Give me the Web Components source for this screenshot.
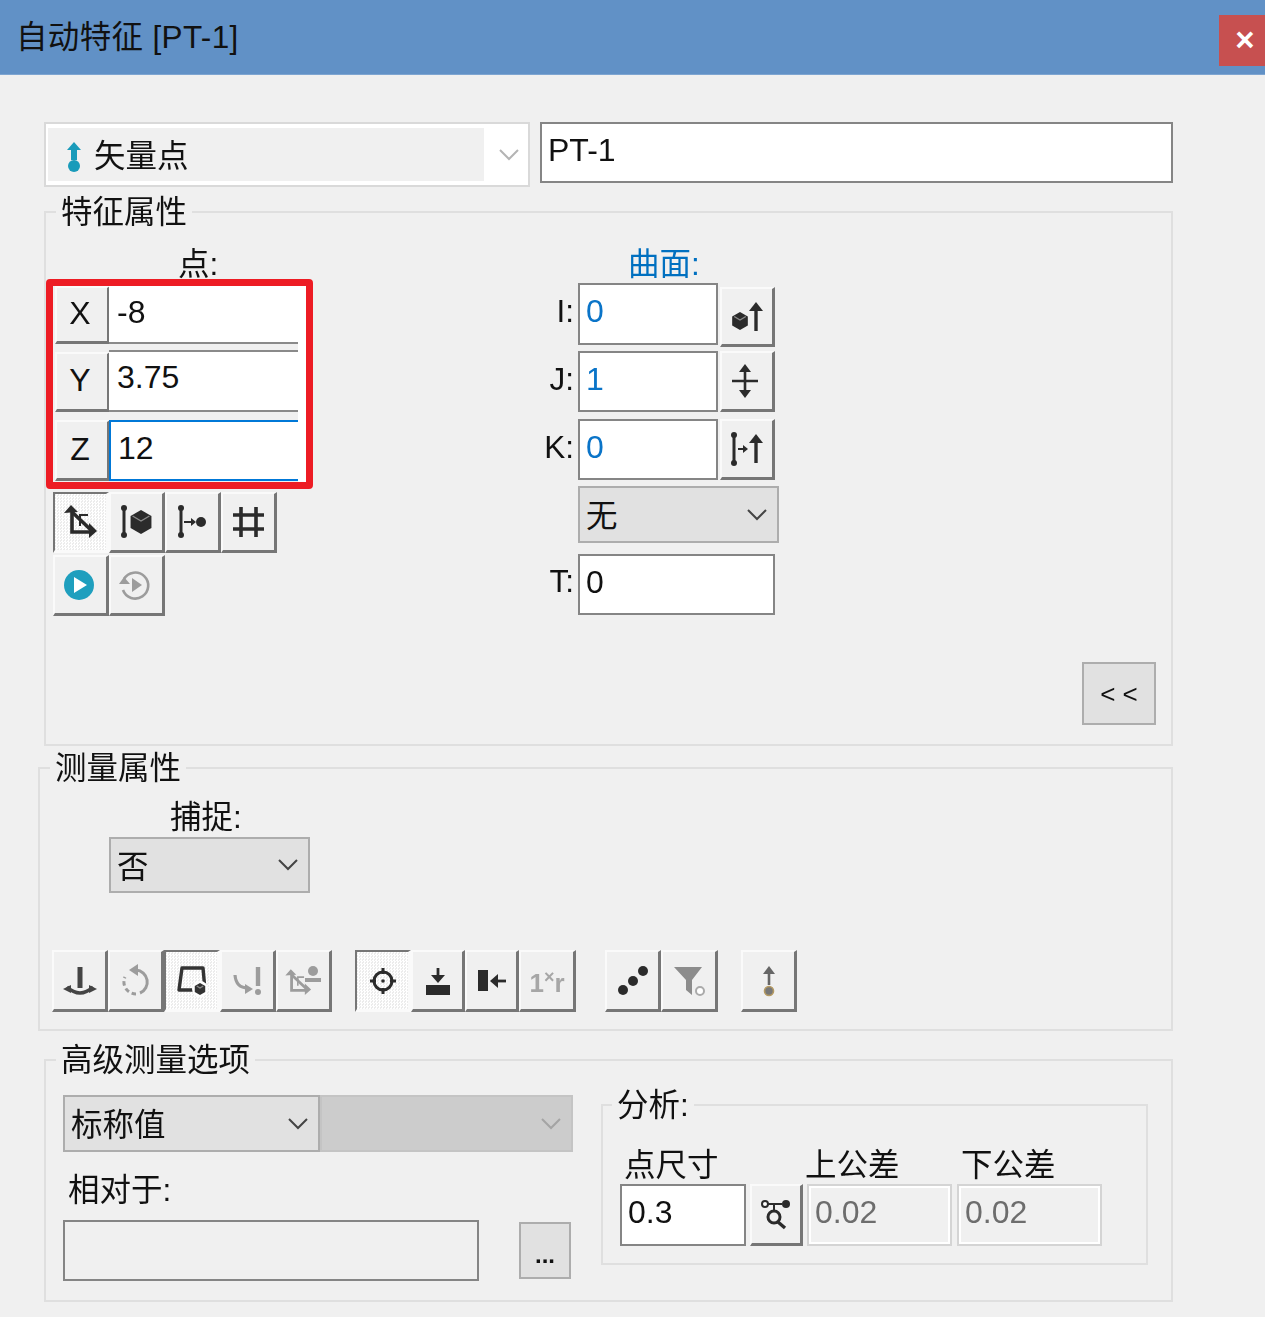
<!DOCTYPE html>
<html lang="zh-CN">
<head>
<meta charset="utf-8">
<title>自动特征 [PT-1]</title>
<style>
html,body{margin:0;background:#f0f0f0}
body{font:31.5px/32px "Liberation Sans","Noto Sans CJK SC",sans-serif;color:#111}
</style>
</head>
<body>
<auto-feature-dialog></auto-feature-dialog>

<template id="dialogTpl">
  <style>
    :host{display:block;width:1265px;height:1317px;overflow:hidden;filter:blur(.6px)}
    .main{padding:47px 92px 0 44px}
    .top{display:flex;gap:10px;align-items:flex-start;height:65px}
    .top win-combo{width:486px;height:65px}
    .top win-input{flex:1;height:61px}
    .g1{margin-top:10px;height:549px}
    .g2{margin:7px 0 0 -6px;height:278px}
    .g3{margin-top:14px;height:257px}

    .g1-body{display:flex;height:517px}
    .left{width:267px}
    .cap-pt{margin:22px 0 -2px 132px;height:32px;line-height:30px}
    .redbox{border:7px solid #ed1c24;border-radius:4px;height:196px}
    .redin{border-right:8px solid #fff;height:196px;display:flex;flex-direction:column}
    .xyz{display:flex;height:58px;margin-bottom:6px}
    .xyz:nth-child(2){height:62px;margin-bottom:8px}
    .xyz:last-child{height:61px;margin:0}
    .xyz win-btn{width:55px;margin-left:2px;font-size:32px;padding:0 4px 3px 0}
    .xyz win-input{flex:1;margin-left:-1px}
    .tools{display:grid;grid-template-columns:repeat(4,56px);grid-auto-rows:61px;gap:2px 0;margin:3px 0 0 7px}
    .right{margin-left:221px;width:250px}
    .cap-sf{margin:22px 0 2px 94px;height:32px;line-height:30px;color:#0070c0}
    .vec{display:flex;align-items:flex-start}
    .vec label{width:40px;margin-right:4px;text-align:right;line-height:56px}
    .vec win-input{width:140px;height:100%}
    .vec win-btn{width:55px;margin-left:2px;height:100%}
    .blue{color:#0a74c8}
    .back{margin:auto 15px 19px auto;width:74px;height:63px}

    .cap-snap{margin:18px 0 0 130px;height:32px}
    .snap{width:201px;height:56px;margin:4px 0 0 69px}
    .g2-tools{display:flex;margin:57px 0 0 12px;height:62px}
    .g2-tools win-btn{width:56px}
    .sp{width:23px}

    .g3-body{display:flex}
    .g3-left{width:555px;padding-left:17px;box-sizing:border-box}
    .cmbs{display:flex;margin-top:20px;height:57px;width:510px}
    .cmbs win-combo:first-child{width:257px}
    .cmbs win-combo:last-child{width:253px}
    .cap-rel{margin:22px 0 0 5px;height:32px;line-height:32px}
    .rel{display:flex;align-items:flex-start;margin-top:14px}
    .rel win-input{width:416px;height:61px}
    .rel win-btn{width:52px;height:57px;margin:2px 0 0 40px}
    .g3-right{width:547px;margin-top:15px;height:175px;--lg:9px}
    .ana{display:grid;grid-template-columns:126px 53px 145px 146px;column-gap:4px;margin:28px 0 0 17px;grid-template-rows:36px 62px;line-height:34px}
    .ana span:first-child{grid-column:1/3;padding-left:4px}
    .ana span:nth-child(2){margin-left:-2px}
    .ana span:nth-child(3){margin-left:5px}
    .ana win-input[disabled]:last-child{margin-left:1px}
  </style>
  <dlg-titlebar>自动特征 [PT-1]</dlg-titlebar>
  <div class="main">
    <div class="top">
      <win-combo kind="flat"><win-icon name="topvec"></win-icon>矢量点</win-combo>
      <win-input>PT-1</win-input>
    </div>

    <win-group class="g1" legend="特征属性">
      <div class="g1-body">
        <div class="left">
          <div class="cap-pt">点:</div>
          <div class="redbox"><div class="redin">
            <div class="xyz"><win-btn>X</win-btn><win-input kind="inner">-8</win-input></div>
            <div class="xyz"><win-btn style="margin-top:2px">Y</win-btn><win-input kind="inner" style="border-top-width:2px;line-height:50px">3.75</win-input></div>
            <div class="xyz"><win-btn>Z</win-btn><win-input kind="focus">12</win-input></div>
          </div></div>
          <div class="tools">
            <win-btn pressed><win-icon name="axes"></win-icon></win-btn>
            <win-btn><win-icon name="pincube"></win-icon></win-btn>
            <win-btn><win-icon name="pindot"></win-icon></win-btn>
            <win-btn><win-icon name="hash"></win-icon></win-btn>
            <win-btn style="padding-right:4px"><win-icon name="play"></win-icon></win-btn>
            <win-btn style="padding-right:4px"><win-icon name="replay"></win-icon></win-btn>
          </div>
        </div>
        <div class="right">
          <div class="cap-sf">曲面:</div>
          <div class="vec" style="height:62px"><label>I:</label><win-input class="blue">0</win-input><win-btn style="height:60px;margin-top:4px"><win-icon name="cubeup"></win-icon></win-btn></div>
          <div class="vec" style="height:61px;margin-top:6px"><label>J:</label><win-input class="blue">1</win-input><win-btn><win-icon name="dblarrow"></win-icon></win-btn></div>
          <div class="vec" style="height:61px;margin-top:7px"><label>K:</label><win-input class="blue">0</win-input><win-btn><win-icon name="pinup"></win-icon></win-btn></div>
          <div class="vec" style="height:57px;margin-top:6px;padding-left:44px"><win-combo style="width:201px;height:57px">无</win-combo></div>
          <div class="vec" style="height:61px;margin-top:11px"><label style="line-height:54px">T:</label><win-input style="width:197px">0</win-input></div>
        </div>
        <win-btn class="back" kind="flat">&lt; &lt;</win-btn>
      </div>
    </win-group>

    <win-group class="g2" legend="测量属性">
      <div class="cap-snap">捕捉:</div>
      <win-combo class="snap">否</win-combo>
      <div class="g2-tools">
        <win-btn><win-icon name="anchor"></win-icon></win-btn>
        <win-btn><win-icon name="rotate"></win-icon></win-btn>
        <win-btn pressed><win-icon name="trap"></win-icon></win-btn>
        <win-btn><win-icon name="hookpin"></win-icon></win-btn>
        <win-btn><win-icon name="axesdot"></win-icon></win-btn>
        <div class="sp"></div>
        <win-btn pressed><win-icon name="target"></win-icon></win-btn>
        <win-btn style="width:54px"><win-icon name="downbar"></win-icon></win-btn>
        <win-btn style="width:54px"><win-icon name="barleft"></win-icon></win-btn>
        <win-btn style="width:57px"><win-icon name="onexr"></win-icon></win-btn>
        <div class="sp" style="width:29px"></div>
        <win-btn><win-icon name="dots"></win-icon></win-btn>
        <win-btn style="width:57px"><win-icon name="funnel"></win-icon></win-btn>
        <div class="sp"></div>
        <win-btn><win-icon name="updot"></win-icon></win-btn>
      </div>
    </win-group>

    <win-group class="g3" legend="高级测量选项">
      <div class="g3-body">
        <div class="g3-left">
          <div class="cmbs"><win-combo>标称值</win-combo><win-combo kind="off"></win-combo></div>
          <div class="cap-rel">相对于:</div>
          <div class="rel"><win-input style="background:#f0f0f0"></win-input><win-btn kind="flat"><b style="font-weight:700;font-size:24px;position:relative;top:4px">...</b></win-btn></div>
        </div>
        <win-group class="g3-right" legend="分析:">
          <div class="ana">
            <span>点尺寸</span><span>上公差</span><span>下公差</span>
            <win-input>0.3</win-input>
            <win-btn><win-icon name="magnode"></win-icon></win-btn>
            <win-input disabled>0.02</win-input>
            <win-input disabled>0.02</win-input>
          </div>
        </win-group>
      </div>
    </win-group>
  </div>
</template>

<script>
// small helpers for the toolbar glyphs
var D = '#2b2b2b', G = '#9c9c9c';
function pin(x, c, top, bot) {
  return '<path d="M' + x + ' ' + top + 'V' + bot + '" stroke="' + c + '" stroke-width="3" fill="none"/>' +
    '<circle cx="' + x + '" cy="' + (top + 1) + '" r="3" fill="' + c + '"/><circle cx="' + x + '" cy="' + (bot - 1) + '" r="3" fill="' + c + '"/>';
}
function hex(x, y, r, c) {
  var k = r * 0.87, h = r / 2;
  return '<path d="M' + x + ' ' + (y - r) + 'L' + (x + k) + ' ' + (y - h) + 'V' + (y + h) + 'L' + x + ' ' + (y + r) + 'L' + (x - k) + ' ' + (y + h) + 'V' + (y - h) + 'Z" fill="' + c + '"/>' +
    '<path d="M' + (x - k + 2) + ' ' + (y - h) + 'L' + x + ' ' + (y - 1) + 'L' + (x + k - 2) + ' ' + (y - h) + '" stroke="#8a8a8a" stroke-width="1.4" fill="none"/>';
}
function axes(c, sw) {
  return '<g stroke="' + c + '" stroke-width="' + sw + '" fill="none"><path d="M11 8V30H30"/><path d="M11 10L30 28"/><path d="M19 24V13H27" stroke-width="2"/></g>' +
    '<path d="M3 11L10 3L17 10ZM36 29L28 21V36Z" fill="' + c + '"/>';
}

var ICONS = {
  topvec: '<path d="M20 6L27 14H23V24H17V14H13Z" fill="#1a9bba"/><circle cx="20" cy="30" r="6" fill="#1a9bba"/>',
  axes: axes(D, 3.6),
  pincube: pin(7, D, 5, 34) + hex(24, 20, 12, D),
  pindot: pin(8, D, 5, 34) + '<path d="M11 20H20" stroke="' + D + '" stroke-width="2"/><path d="M23 20L18 16V24Z" fill="' + D + '"/><circle cx="28" cy="20" r="5" fill="' + D + '"/>',
  hash: '<path d="M12 5V35M27 5V35M4 13H35M4 27H35" stroke="' + D + '" stroke-width="3.6"/>',
  play: '<circle cx="20" cy="20" r="15" fill="#1f9fbe"/><path d="M15 12L28 20L15 28Z" fill="#fff"/>',
  replay: '<path d="M9 14A13 13 0 1 1 8 25" stroke="' + G + '" stroke-width="2.6" fill="none"/><path d="M4 19H15L9 12Z" fill="' + G + '"/><path d="M17 13L27 20L17 27Z" fill="' + G + '"/>',
  cubeup: hex(13, 24, 9, D) + '<path d="M29 12V34" stroke="' + D + '" stroke-width="3.4"/><path d="M29 5L36 14H22Z" fill="' + D + '"/>',
  dblarrow: '<path d="M18 9V31M5 20H31" stroke="' + D + '" stroke-width="2.6"/><path d="M18 3L24 11H12ZM18 37L24 29H12Z" fill="' + D + '"/>',
  pinup: pin(7, D, 5, 35) + '<path d="M11 20H17" stroke="' + D + '" stroke-width="2"/><path d="M21 20L16 16V24Z" fill="' + D + '"/><path d="M29 12V34" stroke="' + D + '" stroke-width="3.4"/><path d="M29 5L36 14H22Z" fill="' + D + '"/>',
  anchor: '<path d="M20 6V27" stroke="#444" stroke-width="5"/><path d="M7 26Q20 38 33 26" stroke="#444" stroke-width="3.4" fill="none"/><path d="M3 28L11 24V32ZM37 28L29 24V32Z" fill="#444"/>',
  rotate: '<path d="M20 9A12 12 0 0 1 24 32" stroke="' + G + '" stroke-width="3" fill="none"/><path d="M20 33A12 12 0 0 1 9 16" stroke="' + G + '" stroke-width="3" fill="none" stroke-dasharray="4.5 3"/><path d="M22 3V15L13 9Z" fill="' + G + '"/>',
  trap: '<path d="M10 7H31L33 29H7Z" stroke="#333" stroke-width="3.4" fill="none" stroke-linejoin="round"/><circle cx="28" cy="28" r="8" fill="#fff"/>' + hex(28, 28, 6, '#333'),
  hookpin: '<path d="M7 14Q8 27 20 27" stroke="' + G + '" stroke-width="3.2" fill="none"/><path d="M25 28L17 23V33Z" fill="' + G + '"/><path d="M30 6V25" stroke="' + G + '" stroke-width="4.4"/><circle cx="30" cy="31" r="3" fill="' + G + '"/>',
  axesdot: '<g transform="translate(-1 6) scale(.78)">' + axes(G, 3.6) + '</g><circle cx="29" cy="10" r="5" fill="' + G + '"/><path d="M21 19H37" stroke="' + G + '" stroke-width="4"/>',
  target: '<circle cx="20" cy="20" r="9" stroke="' + D + '" stroke-width="3" fill="none"/><path d="M20 7V13M20 27V33M7 20H13M27 20H33" stroke="' + D + '" stroke-width="3"/><circle cx="20" cy="20" r="1.8" fill="' + D + '"/>',
  downbar: '<path d="M20 7V17" stroke="' + D + '" stroke-width="2.8"/><path d="M20 22L13 14H27Z" fill="' + D + '"/><rect x="8" y="24" width="24" height="10" fill="' + D + '"/>',
  barleft: '<rect x="6" y="9" width="10" height="21" fill="' + D + '"/><path d="M23 20H34" stroke="' + D + '" stroke-width="2.8"/><path d="M18 20L26 13V27Z" fill="' + D + '"/>',
  onexr: '<text x="20" y="31" text-anchor="middle" font-family="Liberation Sans" font-weight="700" font-size="26" fill="#a6a6a6">1<tspan font-size="18" dy="-9">×</tspan><tspan dy="9">r</tspan></text>',
  dots: '<circle cx="10" cy="29" r="5" fill="' + D + '"/><circle cx="20" cy="20" r="5" fill="' + D + '"/><circle cx="30" cy="10" r="5" fill="' + D + '"/>',
  funnel: '<path d="M5 6H33L23 19V34L17 29V19Z" fill="#8c8c8c"/><circle cx="31" cy="30" r="4" fill="#fff" stroke="#aaa" stroke-width="2"/>',
  updot: '<path d="M20 10V24" stroke="#666" stroke-width="2.6"/><path d="M20 5L26 13H14Z" fill="#666"/><circle cx="20" cy="30" r="4.5" fill="#777" stroke="#b59a62" stroke-width="1.6"/>',
  magnode: '<circle cx="9" cy="9" r="3" fill="#fff" stroke="' + D + '" stroke-width="2"/><path d="M12 9H26M18 9V16" stroke="' + D + '" stroke-width="2"/><circle cx="30" cy="9" r="4" fill="' + D + '"/><circle cx="18" cy="22" r="6" fill="none" stroke="' + D + '" stroke-width="3"/><path d="M22 27L29 33" stroke="' + D + '" stroke-width="3.4"/>'
};

// element: title bar with close box
class DlgTitlebar extends HTMLElement {
  connectedCallback() {
    var s = this.attachShadow({mode: 'open'});
    s.innerHTML = '<style>' +
      ':host{display:flex;height:75px;background:#6191c6;box-sizing:border-box;border-bottom:1px solid #7ea5d1;padding-left:16px;align-items:flex-start}' +
      '.t{line-height:75px;color:#111;letter-spacing:.35px}' +
      '.x{box-sizing:border-box;margin:15px 0 0 auto;width:46px;height:51px;padding-left:6px;background:#c75050;color:#fff;font:700 33px/49px "Liberation Sans",sans-serif;text-align:center}' +
      '</style><div class="t"><slot></slot></div><div class="x">×</div>';
  }
}

// element: group box, legend sits on the border
class WinGroup extends HTMLElement {
  connectedCallback() {
    var s = this.attachShadow({mode: 'open'});
    s.innerHTML = '<style>' +
      ':host{display:block}' +
      'fieldset{margin:0;padding:0;height:100%;box-sizing:border-box;border:2px solid #dfdfdf}' +
      'legend{margin-left:var(--lg,10px);padding:0 5px;height:30px;line-height:30px}' +
      '</style><fieldset><legend></legend><slot></slot></fieldset>';
    s.querySelector('legend').textContent = this.getAttribute('legend');
  }
}

class WinBtn extends HTMLElement {
  connectedCallback() {
    var s = this.attachShadow({mode: 'open'});
    s.innerHTML = '<style>' +
      ':host{display:flex;align-items:center;justify-content:center;box-sizing:border-box;background:#f0f0f0;' +
      'border-style:solid;border-width:2px 3px 3px 2px;border-color:#fafafa #767676 #767676 #fafafa;color:#111}' +
      ':host([pressed]){border-color:#767676 #fafafa #fafafa #767676;background:repeating-conic-gradient(#fff 0 25%,#ececec 0 50%) 0 0/3px 3px}' +
      ':host([kind=flat]){background:#e1e1e1;border:2px solid #adadad;font-size:26px}' +
      '</style><slot></slot>';
  }
}

class WinInput extends HTMLElement {
  connectedCallback() {
    var s = this.attachShadow({mode: 'open'});
    s.innerHTML = '<style>' +
      ':host{display:block;box-sizing:border-box;background:#fff;border:2px solid #858585;padding-left:6px;' +
      'font-size:32px;line-height:52px;white-space:nowrap;overflow:hidden}' +
      ':host([kind=inner]){border-width:0 0 2px 0;border-color:#8a8a8a;padding-left:8px}' +
      ':host([kind=focus]){border-width:2px 0 2px 2px;border-color:#0078d7;padding-left:7px}' +
      ':host([disabled]){background:#f0f0f0;border-color:#d4d4d4;box-shadow:inset 0 0 0 2px #fff;color:#6d6d6d}' +
      '</style><slot></slot>';
  }
}

class WinCombo extends HTMLElement {
  connectedCallback() {
    var s = this.attachShadow({mode: 'open'});
    var chev = '<svg width="22" height="12" viewBox="0 0 22 12"><path d="M2 1L11 10L20 1" fill="none" stroke="currentColor" stroke-width="2"/></svg>';
    s.innerHTML = '<style>' +
      ':host{display:flex;box-sizing:border-box;background:#e1e1e1;border:2px solid #adadad;align-items:center;color:#111}' +
      '.v{flex:1;display:flex;align-items:center;box-sizing:border-box;height:100%;padding:3px 0 0 6px;min-width:0}' +
      '.a{width:40px;display:flex;justify-content:center;color:#444}' +
      ':host([kind=off]){background:#ccc;border-color:#c4c4c4}' +
      ':host([kind=off]) .a{color:#a4a4a4}' +
      ':host([kind=flat]){background:#fff;border-color:#d9d9d9}' +
      ':host([kind=flat]) .v{background:#f0f0f0;margin:4px 6px 4px 2px;height:calc(100% - 8px);padding-left:6px}' +
      ':host([kind=flat]) .a{width:38px;color:#b4b4b4}' +
      '</style><div class="v"><slot></slot></div><div class="a">' + chev + '</div>';
  }
}

class WinIcon extends HTMLElement {
  connectedCallback() {
    var s = this.attachShadow({mode: 'open'});
    s.innerHTML = '<style>:host{display:block;width:40px;height:40px}svg{display:block}</style>' +
      '<svg width="40" height="40" viewBox="0 0 40 40">' + ICONS[this.getAttribute('name')] + '</svg>';
  }
}

class AutoFeatureDialog extends HTMLElement {
  connectedCallback() {
    var s = this.attachShadow({mode: 'open'});
    s.appendChild(document.querySelector('#dialogTpl').content.cloneNode(true));
  }
}

customElements.define('dlg-titlebar', DlgTitlebar);
customElements.define('win-group', WinGroup);
customElements.define('win-btn', WinBtn);
customElements.define('win-input', WinInput);
customElements.define('win-combo', WinCombo);
customElements.define('win-icon', WinIcon);
customElements.define('auto-feature-dialog', AutoFeatureDialog);
</script>
</body>
</html>
